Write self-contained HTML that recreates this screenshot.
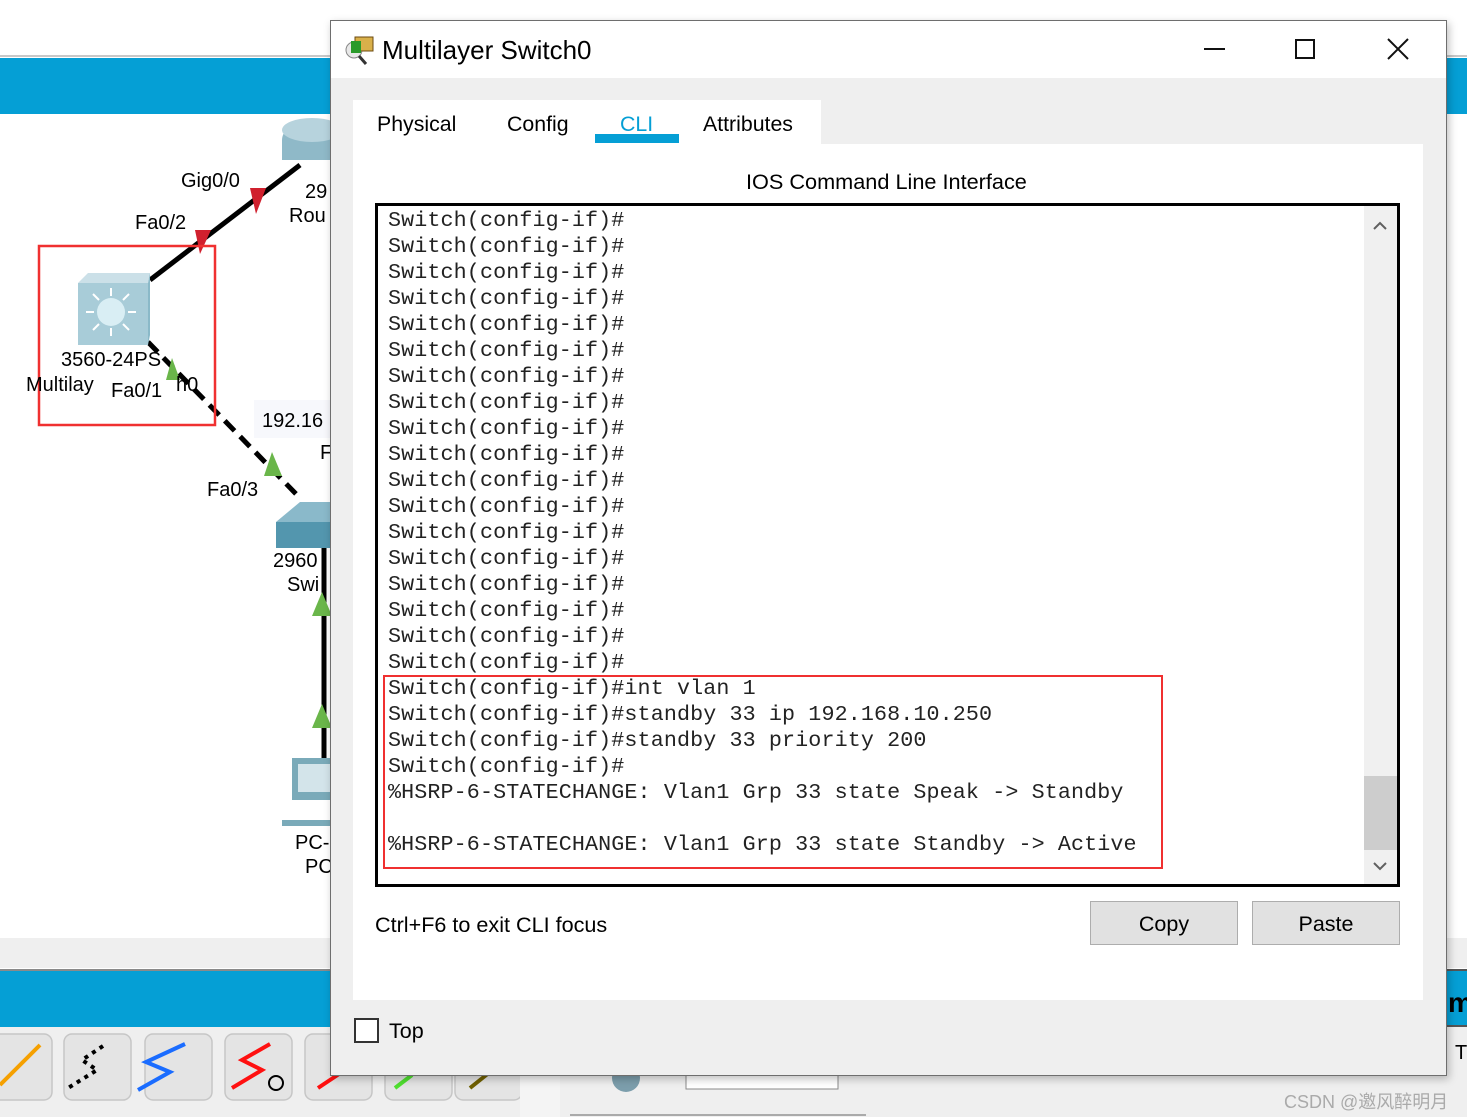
<!DOCTYPE html>
<html><head><meta charset="utf-8"><style>
*{margin:0;padding:0;box-sizing:border-box}
body{width:1467px;height:1117px;position:relative;overflow:hidden;background:#fff;font-family:"Liberation Sans",Arial,sans-serif}
.a{position:absolute}
.t{position:absolute;font-size:20px;color:#000;white-space:nowrap;margin-top:2px}
.cli{position:absolute;left:388px;top:208px;font-family:"Liberation Mono","Courier New",monospace;font-size:21.7px;letter-spacing:0.12px;line-height:26px;color:#222;white-space:pre}
.btn{position:absolute;background:#e1e1e1;border:1px solid #adadad;font-size:21.5px;text-align:center;line-height:44px;color:#000}
</style></head><body>
<div class="a" style="left:0;top:55px;width:1467px;height:2px;background:#c8c8c8"></div>
<div class="a" style="left:0;top:58px;width:1467px;height:56px;background:#059fd5"></div>
<div class="a" style="left:0;top:938px;width:1467px;height:30px;background:#efefef"></div>
<div class="a" style="left:0;top:969px;width:1467px;height:2px;background:#8a8a8a"></div>
<div class="a" style="left:0;top:971px;width:1467px;height:56px;background:#059fd5"></div>
<div class="a" style="left:0;top:1027px;width:1467px;height:90px;background:#efefef"></div>
<svg class="a" style="left:0;top:0" width="1467" height="1117">
 <line x1="150" y1="280" x2="300" y2="165" stroke="#000" stroke-width="5"/>
 <polygon points="250,188 266,188 256,214" fill="#d0202e"/>
 <polygon points="195,230 211,230 200,254" fill="#d0202e"/>
 <line x1="148" y1="342" x2="300" y2="498" stroke="#000" stroke-width="5" stroke-dasharray="14,8"/>
 <polygon points="172,358 180,380 166,380" fill="#6ab64a"/>
 <polygon points="272,452 282,476 264,476" fill="#6ab64a"/>
 <line x1="324" y1="548" x2="324" y2="760" stroke="#000" stroke-width="5"/>
 <polygon points="322,592 332,616 312,616" fill="#6ab64a"/>
 <polygon points="322,704 332,728 312,728" fill="#6ab64a"/>
 <rect x="78" y="283" width="70" height="62" fill="#a8ccd8"/>
 <polygon points="78,283 88,273 150,273 148,283" fill="#cbe0e8"/>
 <polygon points="148,283 150,273 150,335 148,345" fill="#8ab9c8"/>
 <circle cx="111" cy="312" r="14" fill="#d9eef4"/>
 <g stroke="#fff" stroke-width="2"><line x1="111" y1="288" x2="111" y2="296"/><line x1="111" y1="328" x2="111" y2="336"/><line x1="86" y1="312" x2="94" y2="312"/><line x1="128" y1="312" x2="136" y2="312"/><line x1="93" y1="294" x2="99" y2="300"/><line x1="123" y1="324" x2="129" y2="330"/><line x1="129" y1="294" x2="123" y2="300"/><line x1="93" y1="330" x2="99" y2="324"/></g>
 <ellipse cx="312" cy="140" rx="30" ry="20" fill="#8fb9c8"/>
 <rect x="282" y="140" width="48" height="20" fill="#8fb9c8"/>
 <ellipse cx="312" cy="130" rx="30" ry="12" fill="#b7d3dd"/>
 <polygon points="276,522 300,502 330,502 330,522" fill="#8ab9ca"/>
 <rect x="276" y="522" width="54" height="26" fill="#5396ae"/>
 <rect x="292" y="758" width="38" height="42" fill="#7aaab9"/>
 <rect x="298" y="764" width="32" height="28" fill="#d3e4ea"/>
 <rect x="282" y="820" width="48" height="6" fill="#7aaab9"/>
 <rect x="39" y="246" width="176" height="179" fill="none" stroke="#f03030" stroke-width="2.5"/>
 <rect x="254" y="400" width="76" height="38" fill="#f7f8fc"/>
 <g fill="#e4e4e4" stroke="#c6c6c6" stroke-width="1.5">
  <rect x="-10" y="1034" width="62" height="66" rx="8"/><rect x="64" y="1034" width="67" height="66" rx="8"/>
  <rect x="145" y="1034" width="67" height="66" rx="8"/><rect x="225" y="1034" width="67" height="66" rx="8"/>
  <rect x="305" y="1034" width="67" height="66" rx="8"/><rect x="385" y="1034" width="67" height="66" rx="8"/><rect x="455" y="1034" width="67" height="66" rx="8"/>
 </g>
 <line x1="0" y1="1085" x2="40" y2="1045" stroke="#f5a000" stroke-width="4"/>
 <path d="M103 1046 L82 1060 L97 1070 L68 1088" stroke="#000" stroke-width="4" stroke-dasharray="4,5" fill="none"/>
 <path d="M185 1044 L146 1062 L170 1072 L138 1090" stroke="#1a6cff" stroke-width="4" fill="none"/>
 <path d="M270 1044 L242 1060 L262 1070 L232 1088" stroke="#ff1010" stroke-width="4" fill="none"/>
 <circle cx="276" cy="1083" r="7" fill="none" stroke="#000" stroke-width="2"/>
 <line x1="318" y1="1088" x2="345" y2="1070" stroke="#ff1010" stroke-width="4"/>
 <line x1="395" y1="1088" x2="412" y2="1075" stroke="#50e030" stroke-width="4"/>
 <line x1="470" y1="1088" x2="490" y2="1072" stroke="#706000" stroke-width="4"/>
 <rect x="520" y="1075" width="40" height="42" fill="#f4f4f4"/>
 <circle cx="626" cy="1078" r="14" fill="#7c9eac"/>
 <rect x="686" y="1060" width="152" height="29" fill="#fff" stroke="#8a8a8a"/>
 <line x1="570" y1="1115" x2="866" y2="1115" stroke="#aaa" stroke-width="2"/>
 <line x1="1446" y1="970" x2="1467" y2="970" stroke="#555" stroke-width="2"/>
 <line x1="1446" y1="1026" x2="1467" y2="1026" stroke="#555" stroke-width="2"/>
</svg>
<div class="t" style="left:181px;top:168px">Gig0/0</div>
<div class="t" style="left:135px;top:210px">Fa0/2</div>
<div class="t" style="left:305px;top:179px">29</div>
<div class="t" style="left:289px;top:203px">Rou</div>
<div class="t" style="left:61px;top:347px">3560-24PS</div>
<div class="t" style="left:26px;top:372px">Multilay</div>
<div class="t" style="left:111px;top:378px">Fa0/1</div>
<div class="t" style="left:176px;top:372px">h0</div>
<div class="t" style="left:262px;top:408px">192.16</div>
<div class="t" style="left:320px;top:440px">F</div>
<div class="t" style="left:207px;top:477px">Fa0/3</div>
<div class="t" style="left:273px;top:548px">2960</div>
<div class="t" style="left:287px;top:572px">Swi</div>
<div class="t" style="left:295px;top:830px">PC-</div>
<div class="t" style="left:305px;top:854px">PC</div>
<div class="t" style="left:1448px;top:985px;font-size:28px;font-weight:bold">m</div>
<div class="t" style="left:1455px;top:1040px">T</div>
<div class="t" style="left:1284px;top:1086px;font-size:18px;color:#aaa;font-family:'Liberation Sans','Noto Sans CJK SC',sans-serif">CSDN @邀风醉明月</div>

<div class="a" style="left:330px;top:20px;width:1117px;height:1056px;background:#efefef;border:1px solid #6e6e6e;box-shadow:2px 3px 8px rgba(0,0,0,.25)">
 <div class="a" style="left:0;top:0;width:1115px;height:57px;background:#fff"></div>
</div>
<svg class="a" style="left:343px;top:33px" width="34" height="34"><circle cx="11" cy="17" r="8" fill="#e8e8e8" stroke="#888"/><line x1="16" y1="23" x2="23" y2="31" stroke="#333" stroke-width="3"/><rect x="12" y="4" width="18" height="14" fill="#d9b04a" stroke="#6b4a10"/><rect x="8" y="8" width="10" height="12" fill="#2a9a2a"/></svg>
<div class="t" style="left:382px;top:33px;font-size:26px;font-family:'Liberation Sans','Noto Sans CJK SC',sans-serif">Multilayer Switch0</div>
<div class="a" style="left:1204px;top:48px;width:21px;height:2px;background:#111"></div>
<div class="a" style="left:1295px;top:39px;width:20px;height:20px;border:2px solid #111"></div>
<svg class="a" style="left:1387px;top:38px" width="22" height="22"><path d="M1 1L21 21M21 1L1 21" stroke="#111" stroke-width="2"/></svg>

<div class="a" style="left:353px;top:100px;width:468px;height:44px;background:#fff"></div>
<div class="a" style="left:353px;top:144px;width:1070px;height:856px;background:#fff"></div>
<div class="t" style="left:377px;top:110px;font-size:21.3px">Physical</div>
<div class="t" style="left:507px;top:110px;font-size:21.3px">Config</div>
<div class="t" style="left:620px;top:110px;font-size:21.3px;color:#059fd5">CLI</div>
<div class="a" style="left:595px;top:134px;width:84px;height:9px;background:#059fd5"></div>
<div class="t" style="left:703px;top:110px;font-size:21.3px">Attributes</div>
<div class="t" style="left:746px;top:167px;font-size:21.7px">IOS Command Line Interface</div>

<div class="a" style="left:375px;top:203px;width:1025px;height:684px;border:3px solid #000;background:#fff"></div>
<div class="a" style="left:1364px;top:206px;width:33px;height:678px;background:#f0f0f0"></div>
<div class="a" style="left:1364px;top:776px;width:33px;height:74px;background:#cdcdcd"></div>
<svg class="a" style="left:1372px;top:220px" width="16" height="12"><path d="M2 9L8 3L14 9" stroke="#606060" stroke-width="2" fill="none"/></svg>
<svg class="a" style="left:1372px;top:860px" width="16" height="12"><path d="M2 3L8 9L14 3" stroke="#606060" stroke-width="2" fill="none"/></svg>
<div class="cli">Switch(config-if)#
Switch(config-if)#
Switch(config-if)#
Switch(config-if)#
Switch(config-if)#
Switch(config-if)#
Switch(config-if)#
Switch(config-if)#
Switch(config-if)#
Switch(config-if)#
Switch(config-if)#
Switch(config-if)#
Switch(config-if)#
Switch(config-if)#
Switch(config-if)#
Switch(config-if)#
Switch(config-if)#
Switch(config-if)#
Switch(config-if)#int vlan 1
Switch(config-if)#standby 33 ip 192.168.10.250
Switch(config-if)#standby 33 priority 200
Switch(config-if)#
%HSRP-6-STATECHANGE: Vlan1 Grp 33 state Speak -&gt; Standby

%HSRP-6-STATECHANGE: Vlan1 Grp 33 state Standby -&gt; Active</div>
<div class="a" style="left:383px;top:675px;width:780px;height:194px;border:2.5px solid #f03030"></div>

<div class="t" style="left:375px;top:910px;font-size:21.6px">Ctrl+F6 to exit CLI focus</div>
<div class="btn" style="left:1090px;top:901px;width:148px;height:44px">Copy</div>
<div class="btn" style="left:1252px;top:901px;width:148px;height:44px">Paste</div>
<div class="a" style="left:354px;top:1018px;width:25px;height:25px;border:2px solid #333;background:#fff"></div>
<div class="t" style="left:389px;top:1017px;font-size:21.5px">Top</div>
</body></html>
